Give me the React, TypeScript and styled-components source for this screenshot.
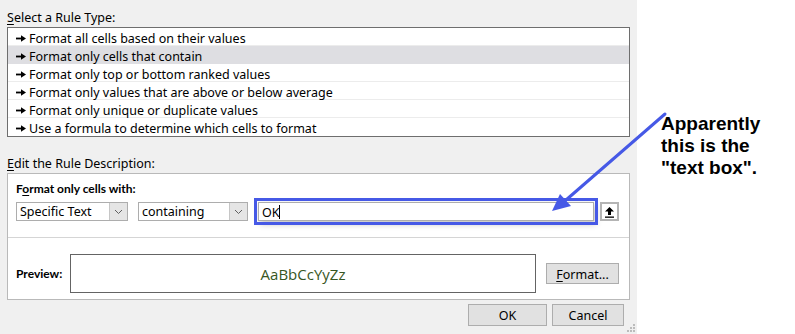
import React from "react";
import styled, { createGlobalStyle } from "styled-components";

const GlobalStyle = createGlobalStyle`
  html, body {
    margin: 0;
    padding: 0;
    background: #ffffff;
  }
  body {
    font-family: "Noto Sans", "Open Sans", Arial, sans-serif;
    font-size: 12.5px;
    color: #000;
  }
`;

const BLUE = "#4659e6";

const Page = styled.div`
  position: relative;
  display: flex;
  width: 795px;
  height: 334px;
  overflow: hidden;
`;

const Dialog = styled.div`
  position: relative;
  display: flex;
  flex-direction: column;
  width: 637px;
  box-sizing: border-box;
  padding: 9px 7px 0 7px;
  background: #f0f0f0;
`;

const Label = styled.div<{ $top?: number }>`
  height: 16px;
  line-height: 18px;
  margin-top: ${({ $top }) => $top ?? 0}px;
  margin-bottom: 2px;
  white-space: nowrap;
`;

const Key = styled.span`
  text-decoration: underline;
  text-underline-offset: 2px;
`;

const ListBox = styled.div`
  display: flex;
  flex-direction: column;
  border: 1px solid #6e6e6e;
  background: #fff;
`;

const Row = styled.div<{ $selected?: boolean }>`
  display: flex;
  align-items: center;
  gap: 3px;
  height: 18px;
  box-sizing: border-box;
  padding: 3px 0 0 8px;
  border-bottom: 1px solid ${({ $selected }) => ($selected ? "transparent" : "#ececec")};
  background: ${({ $selected }) => ($selected ? "#dedee2" : "#fff")};
  white-space: nowrap;

  &:last-child {
    border-bottom: none;
  }
`;

const Group = styled.div`
  display: flex;
  flex-direction: column;
  border: 1px solid #b9b9b9;
  background: #fff;
  padding: 6px 10px 6px 8px;
`;

const Bold = styled.div`
  font-family: Lato, "Noto Sans", sans-serif;
  font-weight: 700;
  font-size: 12px;
  height: 16px;
  line-height: 18px;
  white-space: nowrap;
`;

const Controls = styled.div`
  display: flex;
  align-items: center;
  gap: 10px;
  margin-top: 6px;
  height: 19px;
`;

const Combo = styled.div<{ $width: number }>`
  display: flex;
  align-items: stretch;
  width: ${({ $width }) => $width}px;
  height: 19px;
  box-sizing: border-box;
  border: 1px solid #adadad;
  background: #fff;
`;

const ComboText = styled.div`
  flex: 1;
  padding-left: 3px;
  line-height: 18px;
  white-space: nowrap;
`;

const ComboButton = styled.div`
  display: flex;
  align-items: center;
  justify-content: center;
  width: 17px;
  background: #e5e5e5;
  border-left: 1px solid #c6c6c6;
`;

const FieldRow = styled.div`
  display: flex;
  align-items: center;
  gap: 6px;
`;

const TextField = styled.div`
  display: flex;
  align-items: center;
  width: 336px;
  height: 19px;
  box-sizing: border-box;
  border: 1px solid #adadad;
  padding: 1px 0 0 3px;
  outline: 3px solid ${BLUE};
  outline-offset: 1px;
  box-shadow: 2px 3px 6px rgba(0, 0, 0, 0.25);
`;

const Caret = styled.span`
  display: inline-block;
  width: 1px;
  height: 14px;
  background: #000;
  margin-left: -1px;
`;

const CollapseButton = styled.div`
  display: flex;
  align-items: center;
  justify-content: center;
  width: 19px;
  height: 19px;
  box-sizing: border-box;
  border: 2px solid #b4b4b4;
  background: #fff;
`;

const Divider = styled.div`
  height: 1px;
  margin: 16px -10px 0 -8px;
  background: #d5d5d5;
`;

const PreviewRow = styled.div`
  display: flex;
  align-items: center;
  margin-top: 16px;
`;

const PreviewLabel = styled(Bold)`
  width: 54px;
  height: auto;
`;

const PreviewBox = styled.div`
  display: flex;
  align-items: center;
  justify-content: center;
  width: 466px;
  height: 39px;
  box-sizing: border-box;
  border: 1px solid #646464;
  color: #375623;
  font-family: "Open Sans", "Noto Sans", sans-serif;
  font-size: 15px;
`;

const Button = styled.div<{ $width: number }>`
  display: flex;
  align-items: center;
  justify-content: center;
  width: ${({ $width }) => $width}px;
  height: 22px;
  box-sizing: border-box;
  padding-top: 1px;
  border: 1px solid #adadad;
  background: #e1e1e1;
`;

const FormatButton = styled(Button)`
  margin-left: 10px;
  height: 21px;
`;

const Footer = styled.div`
  display: flex;
  justify-content: flex-end;
  gap: 5px;
  margin-top: 4px;
  padding-right: 6px;
`;

const Grip = styled.svg`
  position: absolute;
  right: 2px;
  bottom: 2px;
`;

const Note = styled.div`
  padding: 113px 0 0 24px;
  font-family: "Liberation Sans", Arial, sans-serif;
  font-weight: 700;
  font-size: 19px;
  line-height: 22px;
  color: #000;
`;

const Overlay = styled.svg`
  position: absolute;
  left: 0;
  top: 0;
  pointer-events: none;
`;

const Bullet = () => (
  <svg width="10" height="7" viewBox="0 0 10 7">
    <rect x="0" y="2.6" width="6" height="1.8" fill="#000" />
    <path d="M5 0.3 L10 3.5 L5 6.7 Z" fill="#000" />
  </svg>
);

const Chevron = () => (
  <svg width="9" height="6" viewBox="0 0 9 6">
    <path d="M1 1 L4.5 4.5 L8 1" fill="none" stroke="#606060" strokeWidth="1" />
  </svg>
);

const rules = [
  "Format all cells based on their values",
  "Format only cells that contain",
  "Format only top or bottom ranked values",
  "Format only values that are above or below average",
  "Format only unique or duplicate values",
  "Use a formula to determine which cells to format",
];

export default function App() {
  return (
    <Page>
      <GlobalStyle />
      <Dialog>
        <Label>
          <Key>S</Key>elect a Rule Type:
        </Label>
        <ListBox>
          {rules.map((r, i) => (
            <Row key={r} $selected={i === 1}>
              <Bullet />
              {r}
            </Row>
          ))}
        </ListBox>

        <Label $top={18}>
          <Key>E</Key>dit the Rule Description:
        </Label>
        <Group>
          <Bold>
            F<Key>o</Key>rmat only cells with:
          </Bold>
          <Controls>
            <Combo $width={112}>
              <ComboText>Specific Text</ComboText>
              <ComboButton>
                <Chevron />
              </ComboButton>
            </Combo>
            <Combo $width={110}>
              <ComboText>containing</ComboText>
              <ComboButton>
                <Chevron />
              </ComboButton>
            </Combo>
            <FieldRow>
              <TextField>
                OK<Caret />
              </TextField>
              <CollapseButton>
                <svg width="11" height="12" viewBox="0 0 11 12">
                  <path d="M5.5 1 L10 5.5 L7 5.5 L7 9 L4 9 L4 5.5 L1 5.5 Z" fill="#000" />
                  <rect x="1" y="10.5" width="9" height="1.3" fill="#000" />
                </svg>
              </CollapseButton>
            </FieldRow>
          </Controls>
          <Divider />
          <PreviewRow>
            <PreviewLabel>Preview:</PreviewLabel>
            <PreviewBox>AaBbCcYyZz</PreviewBox>
            <FormatButton $width={73}>
              <span>
                <Key>F</Key>ormat...
              </span>
            </FormatButton>
          </PreviewRow>
        </Group>

        <Footer>
          <Button $width={79}>OK</Button>
          <Button $width={72}>Cancel</Button>
        </Footer>

        <Grip width="8" height="8" viewBox="0 0 8 8">
          {[
            [6, 0],
            [6, 3],
            [3, 3],
            [6, 6],
            [3, 6],
            [0, 6],
          ].map(([x, y]) => (
            <rect key={`${x}-${y}`} x={x} y={y} width="2" height="2" fill="#bcbcbc" />
          ))}
        </Grip>
      </Dialog>

      <Note>
        Apparently
        <br />
        this is the
        <br />
        "text box".
      </Note>

      <Overlay width="795" height="334" viewBox="0 0 795 334">
        <line x1="665" y1="114" x2="566" y2="200" stroke={BLUE} strokeWidth="3" strokeLinecap="round" />
        <path d="M552 211 L560 194 L571 206 Z" fill={BLUE} />
      </Overlay>
    </Page>
  );
}
